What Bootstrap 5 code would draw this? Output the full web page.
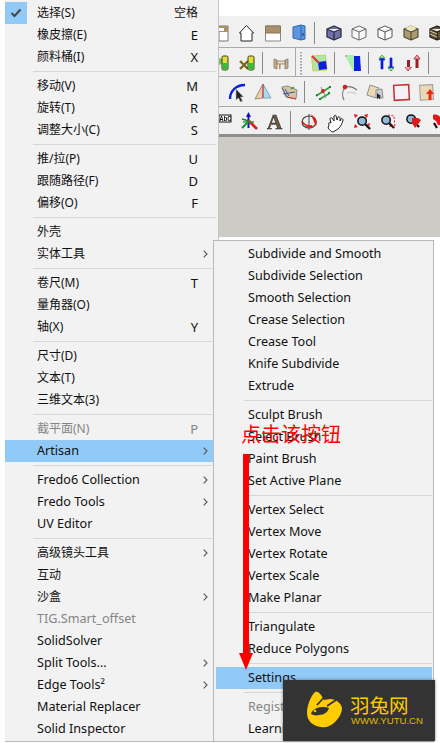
<!DOCTYPE html>
<html lang="zh">
<head>
    <meta charset="UTF-8">
    <title>Tools menu</title>
    <link href="https://cdn.jsdelivr.net/npm/bootstrap@5.3.0/dist/css/bootstrap.min.css" rel="stylesheet">
    <style>
        body {
            background: #fff;
            font-family: "Noto Sans", "Noto Sans CJK SC", sans-serif;
            overflow: hidden;
        }

        .app-shell { width: 440px; height: 743px; }

        /* popup menus, built on the dropdown component */
        .menu-pane {
            --bs-dropdown-bg: #f2f2f2;
            --bs-dropdown-border-radius: 0;
            --bs-dropdown-padding-y: 0;
            --bs-dropdown-min-width: 0;
            --bs-dropdown-divider-bg: #d7d7d7;
            --bs-dropdown-divider-margin-y: 3px;
            --bs-dropdown-link-color: #111;
            --bs-dropdown-link-hover-color: #111;
            --bs-dropdown-link-hover-bg: #91c9f7;
            --bs-dropdown-link-active-color: #111;
            --bs-dropdown-link-active-bg: #91c9f7;
            --bs-dropdown-link-disabled-color: #858585;
            --bs-dropdown-item-padding-x: 0;
            --bs-dropdown-item-padding-y: 0;
            --bs-dropdown-font-size: 12.6px;
            --bs-dropdown-border-width: 0;
            border-color: #b9b9b9;
        }

        .menu-pane .dropdown-item {
            height: 22px;
            line-height: 22px;
            display: flex;
            align-items: center;
        }

        .menu-pane .dropdown-divider { opacity: 1; }

        .main-pane {
            margin-left: 5px;
            width: 214px;
            height: 742px;
            padding-top: 2px;
            border-right: 1px solid #c4c4c4;
            border-bottom: 1px solid #b9b9b9;
            flex: none;
        }

        .main-pane .dropdown-item { padding-left: 32px; padding-right: 10px; }
        .main-pane .dropdown-item.has-tick { padding-left: 0; }
        .main-pane .dropdown-divider { margin-left: 28px; margin-right: 2px; }

        .zh-row { font-size: 12px; }

        .tick-cell {
            width: 22px;
            height: 22px;
            margin-right: 10px;
            background: #91c9f7;
        }

        .key-hint { margin-left: auto; margin-right: 10px; font-size: 13px; }
        .key-hint.wide { font-size: 12px; }
        .arrow-hint { margin-left: auto; flex: none; }

        .sub-pane {
            left: 213px;
            top: 240px;
            width: 221px;
            height: 502px;
            padding-top: 2px;
            border: 1px solid #b9b9b9;
        }

        .sub-pane .dropdown-item { padding-left: 32px; margin-left: 2px; width: 216px; }
        .sub-pane .dropdown-divider { margin-left: 30px; margin-right: 1px; }

        /* toolbars */
        .tool-area { min-width: 0; }
        .top-strip { height: 16px; background: #fff; }
        .tool-row {
            background: #f0f0f0;
            border-bottom: 1px solid #a9a9a9;
        }
        .tool-row svg { display: block; filter: blur(.35px); }
        .tool-row svg svg { filter: none; }
        .row-a { height: 32px; }
        .row-b { height: 29px; }
        .row-c { height: 30px; }
        .row-d { height: 30px; border-bottom: 3px solid #8e8e8e; }
        .view-canvas { height: 100px; background: #cccbc6; }

        /* things lying over the menus; the dropdown sits at z-index 1000 */
        .hint-label {
            left: 241px;
            top: 419px;
            z-index: 1010;
            color: #f00;
            font-size: 20px;
            line-height: 30px;
            font-weight: 400;
            font-family: "Noto Sans CJK SC", sans-serif;
        }

        .hint-arrow { left: 238px; top: 454px; z-index: 1010; }

        .brand-box {
            left: 283px;
            top: 680px;
            width: 152px;
            height: 61px;
            z-index: 1020;
            background: #333;
            box-shadow: 0 0 3px rgba(0, 0, 0, .45);
        }

        .brand-name {
            left: 67px;
            top: 15px;
            color: #fc0;
            font-size: 19.5px;
            line-height: 20px;
            font-weight: 400;
            font-family: "Noto Sans CJK SC", sans-serif;
            white-space: nowrap;
        }

        .brand-url {
            left: 68px;
            top: 35px;
            color: #e5b800;
            font-size: 9.6px;
            line-height: 12px;
            font-family: "Liberation Sans", sans-serif;
            white-space: nowrap;
        }
    </style>
</head>
<body>
<svg class="d-none">
    <symbol id="chev" viewBox="0 0 5 8"><path d="M.7.7 4 4 .7 7.3" fill="none" stroke="#555" stroke-width="1.1"/></symbol>
    <symbol id="cube" viewBox="0 0 16 16"><path d="M1 4 8 1l7 3v8l-7 3-7-3z M1 4l7 3 7-3M8 7v8" stroke-linejoin="round"/></symbol>
    <symbol id="lens" viewBox="0 0 16 16"><circle cx="6.500" cy="6.500" r="4.500" fill="#8fb9d8" stroke="#111" stroke-width="1.600"/><path d="m10 10 5 5" stroke="#111" stroke-width="2.400"/></symbol>
</svg>

<div class="app-shell position-relative d-flex">
    <!-- main tools menu -->
    <div class="dropdown-menu show position-static menu-pane main-pane">
        <a class="dropdown-item zh-row has-tick" href="#">
            <span class="tick-cell d-flex align-items-center justify-content-center">
                <svg width="12" height="10" viewBox="0 0 12 10"><path d="M1.500 5 4.500 8 10.500 1.500" fill="none" stroke="#444" stroke-width="2"/></svg>
            </span>选择(S)<span class="key-hint wide">空格</span>
        </a>
        <a class="dropdown-item zh-row" href="#">橡皮擦(E)<span class="key-hint">E</span></a>
        <a class="dropdown-item zh-row" href="#">颜料桶(I)<span class="key-hint">X</span></a>
        <div class="dropdown-divider"></div>
        <a class="dropdown-item zh-row" href="#">移动(V)<span class="key-hint">M</span></a>
        <a class="dropdown-item zh-row" href="#">旋转(T)<span class="key-hint">R</span></a>
        <a class="dropdown-item zh-row" href="#">调整大小(C)<span class="key-hint">S</span></a>
        <div class="dropdown-divider"></div>
        <a class="dropdown-item zh-row" href="#">推/拉(P)<span class="key-hint">U</span></a>
        <a class="dropdown-item zh-row" href="#">跟随路径(F)<span class="key-hint">D</span></a>
        <a class="dropdown-item zh-row" href="#">偏移(O)<span class="key-hint">F</span></a>
        <div class="dropdown-divider"></div>
        <a class="dropdown-item zh-row" href="#">外壳</a>
        <a class="dropdown-item zh-row" href="#">实体工具<svg class="arrow-hint" width="5" height="8"><use href="#chev"/></svg></a>
        <div class="dropdown-divider"></div>
        <a class="dropdown-item zh-row" href="#">卷尺(M)<span class="key-hint">T</span></a>
        <a class="dropdown-item zh-row" href="#">量角器(O)</a>
        <a class="dropdown-item zh-row" href="#">轴(X)<span class="key-hint">Y</span></a>
        <div class="dropdown-divider"></div>
        <a class="dropdown-item zh-row" href="#">尺寸(D)</a>
        <a class="dropdown-item zh-row" href="#">文本(T)</a>
        <a class="dropdown-item zh-row" href="#">三维文本(3)</a>
        <div class="dropdown-divider"></div>
        <a class="dropdown-item zh-row disabled" href="#">截平面(N)<span class="key-hint">P</span></a>
        <a class="dropdown-item active" href="#">Artisan<svg class="arrow-hint" width="5" height="8"><use href="#chev"/></svg></a>
        <div class="dropdown-divider"></div>
        <a class="dropdown-item" href="#">Fredo6 Collection<svg class="arrow-hint" width="5" height="8"><use href="#chev"/></svg></a>
        <a class="dropdown-item" href="#">Fredo Tools<svg class="arrow-hint" width="5" height="8"><use href="#chev"/></svg></a>
        <a class="dropdown-item" href="#">UV Editor</a>
        <div class="dropdown-divider"></div>
        <a class="dropdown-item zh-row" href="#">高级镜头工具<svg class="arrow-hint" width="5" height="8"><use href="#chev"/></svg></a>
        <a class="dropdown-item zh-row" href="#">互动</a>
        <a class="dropdown-item zh-row" href="#">沙盒<svg class="arrow-hint" width="5" height="8"><use href="#chev"/></svg></a>
        <a class="dropdown-item disabled" href="#">TIG.Smart_offset</a>
        <a class="dropdown-item" href="#">SolidSolver</a>
        <a class="dropdown-item" href="#">Split Tools...<svg class="arrow-hint" width="5" height="8"><use href="#chev"/></svg></a>
        <a class="dropdown-item" href="#">Edge Tools²<svg class="arrow-hint" width="5" height="8"><use href="#chev"/></svg></a>
        <a class="dropdown-item" href="#">Material Replacer</a>
        <a class="dropdown-item" href="#">Solid Inspector</a>
    </div>

    <!-- toolbars behind the menus -->
    <div class="tool-area flex-grow-1">
        <div class="top-strip"></div>

        <div class="tool-row row-a">
            <svg width="221" height="31" viewBox="219 16 221 31">
                <path d="M219 26h9v15h-9z" fill="#fff" stroke="#777"/><path d="M219 26h9v6h-9z" fill="#a8906c"/><path d="M219 28h5v3h-5z" fill="#fff"/>
                <path d="M239.500 33 246.500 25.500 253.500 33h-1.500v8h-11v-8z" fill="#fff" stroke="#222" stroke-linejoin="round"/>
                <path d="M265.500 26h15v15h-15z" fill="#fff" stroke="#888"/><path d="M265.500 26h15v7h-15z" fill="#a8906c" stroke="#8a7658"/>
                <path d="M293 27l8-2 4 1v13l-4 1-8-2z" fill="#5a97e0" stroke="#2f65a8"/><path d="M301 25v15" stroke="#2f65a8"/><path d="M302 33h2v3h-2z" fill="#2f65a8"/>
                <path d="M314.500 22v22" stroke="#8a8a8a"/>
                <svg x="326" y="25" width="16" height="16"><use href="#cube" fill="#6e72a8" stroke="#2c2c44" stroke-width="1.300"/></svg>
                <svg x="351" y="25" width="16" height="16"><use href="#cube" fill="#fafafa" stroke="#666"/></svg>
                <svg x="377" y="25" width="16" height="16"><use href="#cube" fill="#fff" stroke="#555"/></svg>
                <svg x="403" y="25" width="16" height="16"><use href="#cube" fill="#a89c6e" stroke="#4f482e" stroke-width="1.100"/></svg>
                <path d="M405 28l6-2.500 6 2.500-6 2.500z" fill="#efe6b8"/>
                <svg x="429" y="25" width="16" height="16"><use href="#cube" fill="#5f533c" stroke="#26221a" stroke-width="1.300"/></svg>
                <path d="M430 31l7 3M430 34l7 3" stroke="#d8ca98"/>
            </svg>
        </div>

        <div class="tool-row row-b">
            <svg width="221" height="28" viewBox="219 48 221 28">
                <path d="M219 58l3 1v5l-3 1z" fill="#7ac05c"/>
                <rect x="222" y="56" width="6" height="14" rx="1.500" fill="#dfe03c" stroke="#3a3a1a"/><path d="M222.500 63h5v6.500h-5z" fill="#2fbf3a"/>
                <path d="M240 61l8 8M248 61l-8 8" stroke="#7a6a1e" stroke-width="2.400"/>
                <rect x="248" y="56" width="6" height="14" rx="1.500" fill="#dfe03c" stroke="#3a3a1a"/><path d="M248.500 63h5v6.500h-5z" fill="#2fbf3a"/>
                <path d="M262.500 52v22" stroke="#8a8a8a"/>
                <path d="M274 59l3 1v9l-3-1zM285 60l3-1v9l-3 1z" fill="#c8ae8c" stroke="#7d6c56" stroke-width=".7"/><path d="M277 61h8v3h-8z" fill="#e6dccb" stroke="#7d6c56" stroke-width=".7"/><path d="M279 64h1.600v5h-1.600z" fill="#a7906f"/>
                <path d="M295.500 48v29" stroke="#a9a9a9"/>
                <path d="M301 52v1.500M301 55v1.500M301 58v1.500M301 61v1.500M301 64v1.500M301 67v1.500M301 70v1.500M301 73v1.500" stroke="#a4a4a4" stroke-width="2"/>
                <path d="M311.500 56l14-1 1.500 15-14 1z" fill="#a8e8a8" stroke="#d8c850"/><path d="M318 62l8-1 1 8-8 1z" fill="#0a1ee0"/><path d="M312 56l7 7" stroke="#e23030" stroke-width="2"/>
                <path d="M334.500 52v22" stroke="#8a8a8a"/>
                <path d="M345 55h9v16h-1z" fill="#a6eeb0"/><path d="M354 56h6l1 15h-7z" fill="#0a1ee0"/><circle cx="346" cy="56" r="1" fill="#e88"/>
                <path d="M368.500 52v22" stroke="#8a8a8a"/>
                <path d="M382 56l3 4h-2v9h-2v-9h-2z" fill="#0a1ee0" stroke="#0a1ee0" stroke-width=".7"/><path d="M382 55l3 3h-6z" fill="#9fe8a8" stroke="#3a9a4a" stroke-width=".7"/>
                <path d="M391 71l-3-4h2v-9h2v9h2z" fill="#0a1ee0" stroke="#0a1ee0" stroke-width=".7"/><path d="M391 71l3-3h-6z" fill="#9fe8a8" stroke="#3a9a4a" stroke-width=".7"/>
                <path d="M408 71l-3-4h2v-7h3v7h2z" fill="#a01c28"/><path d="M405 67l3 4 3-4" fill="#f2a8b0" stroke="#a01c28" stroke-width=".6"/>
                <path d="M417 55l3.500 4h-2v9h-3v-9h-2z" fill="#a01c28"/><path d="M417 55l3 4h-6z" fill="#f2a8b0" stroke="#a01c28" stroke-width=".6"/>
                <path d="M428.500 52v22" stroke="#8a8a8a"/>
            </svg>
        </div>

        <div class="tool-row row-c">
            <svg width="221" height="29" viewBox="219 78 221 29">
                <path d="M230 100c0-8 6-14 15-14" fill="none" stroke="#0a1ee0" stroke-width="2.400"/>
                <path d="M236 90v11l2.500-2 2 4 2-1-2-4h3z" fill="#222" stroke="#bbb" stroke-width=".6"/>
                <path d="M263 85l-8 15 8-1z" fill="#ecd0a8" stroke="#a88a68"/><path d="M263 85l8 14-8 0z" fill="#a8dcf2" stroke="#7aa8c0"/><path d="M263 85v14" stroke="#c83030"/>
                <path d="M282 88l6-1 9 4-1 9-10-2z" fill="#d8c4a0" stroke="#777" stroke-width=".8"/><path d="M282 89l5 9M285 90l4 7M283 95l12-2" stroke="#3c5aa0"/><path d="M287 98l9 2" stroke="#d03030"/><path d="M291 90l3-2" stroke="#2ca03c" stroke-width="1.500"/>
                <path d="M304.500 82v22" stroke="#8a8a8a"/>
                <path d="M316 97l14-9M320 100l10-6" stroke="#2ca03c" stroke-width="1.500"/><path d="M321 88l5 11" stroke="#888"/><circle cx="323" cy="92" r="2" fill="#d62020"/><path d="M316 95h2v2h-2zM329 87h2v2h-2zM328 93h2v2h-2zM319 99h2v2h-2z" fill="#1d8a2c"/>
                <path d="M344 101c-2-4-2-9 1-12 4-3 8-1 12 2" fill="none" stroke="#777" stroke-width="1.200"/><path d="M347 94c3-1 6-1 9 1" fill="none" stroke="#ccc" stroke-width="1.200"/><circle cx="345" cy="88" r="2.300" fill="#e01818"/>
                <path d="M370 86l9 3-3 10-9-3z" fill="#ecd8b4" stroke="#8e8e8e"/><path d="M376 91l6-1 1 9-7 0z" fill="#c6d0dc" stroke="#8e8e8e"/><path d="M377 94v6l1.500-1.500 1 1.500 1-.5-1-2h2z" fill="#222"/>
                <path d="M394 86h15v15h-15z" transform="rotate(-3 401 93)" fill="#f4f0f4" stroke="#c03030" stroke-width="1.500"/>
                <path d="M420 86h13v15h-13z" transform="rotate(-3 426 93)" fill="#ecd8b4" stroke="#9a9a9a"/><path d="M430 90l4 5h-2.500v6h-3v-6h-2.500z" fill="#e82a10"/>
            </svg>
        </div>

        <div class="tool-row row-d">
            <svg width="221" height="27" viewBox="219 108 221 27">
                <rect x="219" y="116" width="12" height="7" fill="#fff" stroke="#111"/>
                <text x="219.500" y="122" font-family="Liberation Mono, monospace" font-size="6.500" font-weight="700" fill="#111">AbC</text>
                <path d="M248.500 115v14" stroke="#1414c8" stroke-width="2"/><path d="M248.500 113l-2.500 5h5z" fill="#1414c8"/>
                <path d="M242 129l6-6" stroke="#1d9a2c" stroke-width="2.200"/><path d="M249 122l-7-2" stroke="#1d7a2c" stroke-width="1.500"/><path d="M249 122l8 8" stroke="#d62020" stroke-width="2.600"/><path d="M243 123h11" stroke="#1d9a2c" stroke-width="1.300"/>
                <text x="267" y="130" font-family="Liberation Serif, serif" font-size="21" font-weight="700" fill="#6b5a44" stroke="#2a2420" stroke-width=".5">A</text>
                <path d="M290.500 112v22" stroke="#8a8a8a"/>
                <ellipse cx="309" cy="123" rx="7" ry="6" fill="none" stroke="#444" stroke-width="1.200"/><path d="M309 115v16" stroke="#444"/>
                <path d="M302 121c3 5 7 6 10 5l1 2-6 0-5-4z" fill="#e01818"/><path d="M311 115l5 5c1 2 1 5 0 7l-2-4z" fill="#e01818"/>
                <path d="M329 126c-1-2 0-3 2-2l-1-4c0-1 1-2 2-1l2 3 0-5c1-1 2-1 2 0l1 4 1-3c1-1 2 0 2 1l0 3 1-2c1-1 2 0 2 1-1 4-2 6-5 9l-5 3c-2 0-3-2-5-4z" fill="#fff" stroke="#222" stroke-width="1"/>
                <svg x="356" y="116" width="15" height="15"><use href="#lens"/></svg>
                <path d="M354 115l4 1-3 3zM368 115l-1 4-3-3zM354 129l1-4 3 3z" fill="#e01818"/><path d="M367 125l3-1-1 4z" fill="#e01818"/>
                <svg x="380" y="115" width="15" height="15"><use href="#lens"/></svg>
                <path d="M388 116l6 1 1 11-6-1" fill="none" stroke="#e01818" stroke-dasharray="2 1.500"/>
                <svg x="405" y="114" width="15" height="15"><use href="#lens"/></svg>
                <path d="M412 119h6l3 2-2 3-4 5-3-5z" fill="#e01818"/>
                <path d="M433 116c3-1 6 0 7 2v8h-2l-2-4-3-2z" fill="#e01818"/><path d="M434 124l3 5" stroke="#111" stroke-width="2.200"/>
            </svg>
        </div>

        <div class="view-canvas"></div>
    </div>

    <!-- Artisan submenu, opens over the toolbar area -->
    <div class="dropdown-menu show menu-pane sub-pane position-absolute">
        <a class="dropdown-item" href="#">Subdivide and Smooth</a>
        <a class="dropdown-item" href="#">Subdivide Selection</a>
        <a class="dropdown-item" href="#">Smooth Selection</a>
        <a class="dropdown-item" href="#">Crease Selection</a>
        <a class="dropdown-item" href="#">Crease Tool</a>
        <a class="dropdown-item" href="#">Knife Subdivide</a>
        <a class="dropdown-item" href="#">Extrude</a>
        <div class="dropdown-divider"></div>
        <a class="dropdown-item" href="#">Sculpt Brush</a>
        <a class="dropdown-item" href="#">Select Brush</a>
        <a class="dropdown-item" href="#">Paint Brush</a>
        <a class="dropdown-item" href="#">Set Active Plane</a>
        <div class="dropdown-divider"></div>
        <a class="dropdown-item" href="#">Vertex Select</a>
        <a class="dropdown-item" href="#">Vertex Move</a>
        <a class="dropdown-item" href="#">Vertex Rotate</a>
        <a class="dropdown-item" href="#">Vertex Scale</a>
        <a class="dropdown-item" href="#">Make Planar</a>
        <div class="dropdown-divider"></div>
        <a class="dropdown-item" href="#">Triangulate</a>
        <a class="dropdown-item" href="#">Reduce Polygons</a>
        <div class="dropdown-divider"></div>
        <a class="dropdown-item active" href="#">Settings</a>
        <div class="dropdown-divider"></div>
        <a class="dropdown-item disabled" href="#">Register</a>
        <a class="dropdown-item" href="#">Learning</a>
    </div>

    <!-- annotation -->
    <div class="hint-label position-absolute">点击该按钮</div>
    <svg class="hint-arrow position-absolute" width="16" height="217" viewBox="0 0 16 217">
        <path d="M5 0h6v199h4l-7 17-7-17h4z" fill="#f00"/>
    </svg>

    <!-- watermark -->
    <div class="brand-box position-absolute">
        <svg class="position-absolute top-0 start-0" width="66" height="61" viewBox="283 680 66 61">
            <path d="M315 692c2-1 4 0 6 3l3 5 6-1c6 0 11 4 12 9 0 5-3 10-7 14-4 4-9 6-14 5-8-1-14-6-14-14 0-8 4-17 8-21z" fill="#fc0"/>
            <path d="M328 693l-11 12M336 700l-9 6" stroke="#333" stroke-width="1.800"/>
            <path d="M311 714c1-4 6-7 11-7 3 0 5 0 7 1-1 4-5 7-10 7-3 1-6 0-8-1z" fill="#333"/>
            <circle cx="315" cy="711" r="1.300" fill="#fc0"/>
        </svg>
        <div class="brand-name position-absolute">羽兔网</div>
        <div class="brand-url position-absolute">WWW.YUTU.CN</div>
    </div>
</div>

<script src="https://cdn.jsdelivr.net/npm/bootstrap@5.3.0/dist/js/bootstrap.bundle.min.js"></script>
</body>
</html>
